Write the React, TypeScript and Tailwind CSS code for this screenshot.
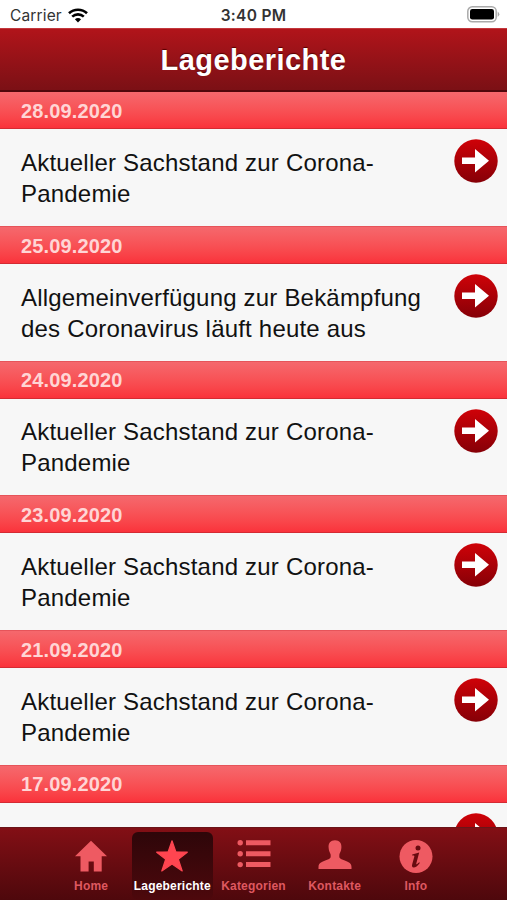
const reports = [
  { date: "28.09.2020", lines: ["Aktueller Sachstand zur Corona-", "Pandemie"] },
  { date: "25.09.2020", lines: ["Allgemeinverfügung zur Bekämpfung", "des Coronavirus läuft heute aus"] },
  { date: "24.09.2020", lines: ["Aktueller Sachstand zur Corona-", "Pandemie"] },
  { date: "23.09.2020", lines: ["Aktueller Sachstand zur Corona-", "Pandemie"] },
  { date: "21.09.2020", lines: ["Aktueller Sachstand zur Corona-", "Pandemie"] },
  { date: "17.09.2020", lines: [] },
];

const tabs = [
  { label: "Home", icon: <HomeIcon /> },
  { label: "Lageberichte", icon: <StarIcon />, active: true },
  { label: "Kategorien", icon: <ListIcon /> },
  { label: "Kontakte", icon: <PersonIcon /> },
  { label: "Info", icon: <InfoIcon /> },
];

function HomeIcon() {
  return (
    <svg width="34" height="34" viewBox="0 0 34 34" fill="currentColor">
      <path d="M17 1.800 L33 17.300 H27.700 V32.500 H19.800 V22.500 H14.600 V32.500 H6.500 V17.300 H1 Z" />
    </svg>
  );
}

function StarIcon() {
  return (
    <svg width="34" height="34" viewBox="0 0 34 34" fill="currentColor" stroke="currentColor" strokeWidth="1.200" strokeLinejoin="round">
      <path d="M17 1.800 L20.800 12.800 L32.300 13.200 L23.300 20.200 L27.200 32 L17 25 L6.800 32 L10.700 20.200 L1.700 13.200 L13.200 12.800 Z" />
    </svg>
  );
}

function ListIcon() {
  return (
    <svg width="34" height="34" viewBox="0 0 34 34" fill="currentColor">
      <circle cx="3.200" cy="3.800" r="2.700" />
      <circle cx="3.200" cy="14.800" r="2.700" />
      <circle cx="3.200" cy="25.600" r="2.700" />
      <path d="M9 1.300h24.500v5H9z M9 12.300h24.500v5H9z M9 23.100h24.500v5H9z" />
    </svg>
  );
}

function PersonIcon() {
  return (
    <svg width="34" height="34" viewBox="0 0 34 34" fill="currentColor">
      <path d="M17 1.200C12.500 1.200 10.300 4.200 10.600 8.500C10.800 12.500 12.200 13.500 12.600 15.500C13 18.500 12.500 19.300 10.500 20.200C5 22.500.5 23 .5 28V30H33.500V28C33.500 23 29 22.500 23.500 20.200C21.500 19.300 21 18.500 21.400 15.500C21.800 13.500 23.200 12.500 23.400 8.500C23.700 4.200 21.500 1.200 17 1.200Z" />
    </svg>
  );
}

function InfoIcon() {
  return (
    <svg width="34" height="34" viewBox="0 0 34 34">
      <circle cx="17" cy="17.500" r="16.500" fill="currentColor" />
      <circle cx="19" cy="8.900" r="2.500" fill="#680b10" />
      <path d="M13.200 15.500C15.500 15 18 14.300 20.200 13.500L17.300 24.500C17 25.800 18 25.300 20.300 23.200L20.800 24C18.500 27 16.500 28.500 14.700 28.500C13 28.500 12.700 27 13.200 25.200L15.300 17.700C15.600 16.500 15 16.300 13.200 16.500Z" fill="#680b10" />
    </svg>
  );
}

function ArrowIcon() {
  return (
    <svg className="mt-[10px] shrink-0" width="44" height="44" viewBox="0 0 44 44">
      <defs>
        <linearGradient id="arrow" x1="0" y1="0" x2="0" y2="1">
          <stop offset="0" stopColor="#cf0208" />
          <stop offset="1" stopColor="#860007" />
        </linearGradient>
      </defs>
      <circle cx="22" cy="22" r="21.700" fill="url(#arrow)" />
      <path d="M8 18.600H21V10L35 21.800L21 33.500V25H8Z" fill="#fff" />
    </svg>
  );
}

function StatusBar() {
  return (
    <div className="grid h-7 shrink-0 grid-cols-3 items-center bg-white pt-[3px] font-['Inter',sans-serif] text-[15.5px] text-[#333]">
      <div className="flex items-center gap-[6px] pl-[10px]">
        <span className="tracking-[0.15px]">Carrier</span>
        <svg className="-mt-px" width="20" height="15" viewBox="0 0 20 15" fill="none" stroke="#000" strokeWidth="2.600">
          <path d="M1 5.300C6 .5 14 .5 19 5.300" />
          <path d="M4.200 8.600C7.500 5.600 12.500 5.600 15.800 8.600" />
          <path d="M10 14.500L6.900 11.300Q10 8.800 13.100 11.300Z" fill="#000" stroke="none" />
        </svg>
      </div>
      <span className="text-center font-semibold tracking-[0.3px]">3:40 PM</span>
      <div className="-mt-[3px] flex justify-end pr-[7px]">
        <svg width="33" height="17" viewBox="0 0 33 17">
          <rect x="0.800" y="0.800" width="28.400" height="15" rx="4.500" fill="#fff" stroke="#aaa" strokeWidth="1.500" />
          <rect x="3" y="3" width="24" height="10.600" rx="2.300" fill="#000" />
          <path d="M30.700 5.500Q34 8.300 30.700 11Z" fill="#aaa" />
        </svg>
      </div>
    </div>
  );
}

export default function App() {
  return (
    <div className="flex h-[900px] w-[507px] flex-col overflow-hidden bg-[#f7f7f7] font-['Liberation_Sans',Arial,sans-serif]">
      <StatusBar />
      <header className="flex h-[64px] shrink-0 items-center justify-center border-t border-b-2 border-t-[#c3373c] border-b-[#50070b] bg-linear-to-b from-[#b1141a] to-[#7b1015] pt-[2px]">
        <h1 className="text-[29px] font-bold tracking-[0.45px] text-white [text-shadow:0_-1px_1px_#500]">Lageberichte</h1>
      </header>
      <main className="min-h-0 flex-1 overflow-hidden">
        {reports.map((report) => (
          <section key={report.date} className="h-[134.67px] first:-mt-[0.6px]">
            <div className="flex h-[38px] items-center border-t border-b border-t-[#e6545a] border-b-[#d42b33] bg-linear-to-b from-[#f5686d] to-[#fa323b] pt-px pl-[21px]">
              <span className="text-[20px] font-bold tracking-[0.15px] text-[#ffd5d5]">{report.date}</span>
            </div>
            <div className="flex items-start justify-between pr-[9px] pl-[21px]">
              <div className="pt-[17.5px] text-[24px] leading-[31px] tracking-[0.2px] whitespace-nowrap text-[#111]">
                {report.lines.map((line) => (
                  <p key={line}>{line}</p>
                ))}
              </div>
              <ArrowIcon />
            </div>
          </section>
        ))}
      </main>
      <nav className="flex h-[73px] shrink-0 justify-center border-t border-[#6a1519] bg-linear-to-b from-[#830f15] to-[#4e080c] pt-1">
        {tabs.map((tab) => (
          <div
            key={tab.label}
            className={
              tab.active
                ? "flex w-[81.2px] flex-col items-center rounded-md bg-linear-to-b from-[#2e0609] to-[#4d080c] pt-[7px] text-[#ff4550]"
                : "flex w-[81.2px] flex-col items-center pt-[7px] text-[#ee5a62]"
            }
          >
            {tab.icon}
            <span
              className={
                tab.active
                  ? "mt-[6px] text-[12px] leading-[14px] font-bold tracking-[0.2px] whitespace-nowrap text-white"
                  : "mt-[6px] text-[12px] leading-[14px] font-bold tracking-[0.2px] whitespace-nowrap text-[#df5860]"
              }
            >
              {tab.label}
            </span>
          </div>
        ))}
      </nav>
    </div>
  );
}
